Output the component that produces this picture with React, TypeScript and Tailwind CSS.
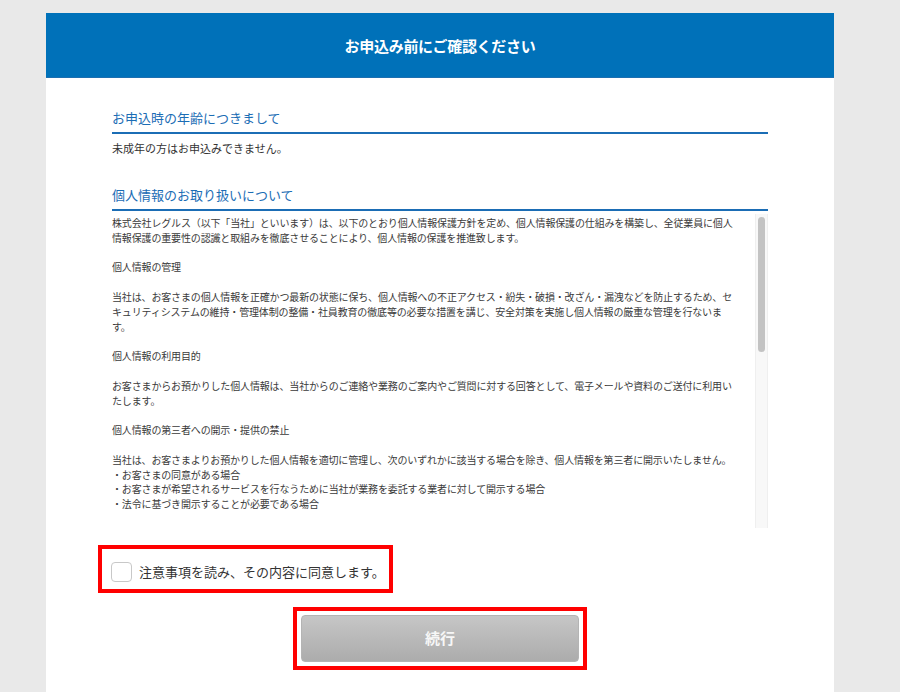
import React from "react";

const jp = { fontFamily: '"Noto Sans CJK JP", "Noto Sans", sans-serif' };

const paragraphs: string[][] = [
  [
    "株式会社レグルス（以下「当社」といいます）は、以下のとおり個人情報保護方針を定め、個人情報保護の仕組みを構築し、全従業員に個人",
    "情報保護の重要性の認識と取組みを徹底させることにより、個人情報の保護を推進致します。",
  ],
  ["個人情報の管理"],
  [
    "当社は、お客さまの個人情報を正確かつ最新の状態に保ち、個人情報への不正アクセス・紛失・破損・改ざん・漏洩などを防止するため、セ",
    "キュリティシステムの維持・管理体制の整備・社員教育の徹底等の必要な措置を講じ、安全対策を実施し個人情報の厳重な管理を行ないま",
    "す。",
  ],
  ["個人情報の利用目的"],
  [
    "お客さまからお預かりした個人情報は、当社からのご連絡や業務のご案内やご質問に対する回答として、電子メールや資料のご送付に利用い",
    "たします。",
  ],
  ["個人情報の第三者への開示・提供の禁止"],
  [
    "当社は、お客さまよりお預かりした個人情報を適切に管理し、次のいずれかに該当する場合を除き、個人情報を第三者に開示いたしません。",
    "・お客さまの同意がある場合",
    "・お客さまが希望されるサービスを行なうために当社が業務を委託する業者に対して開示する場合",
    "・法令に基づき開示することが必要である場合",
  ],
];

function Heading({ children, className }: { children: React.ReactNode; className?: string }) {
  return (
    <div className={className}>
      <div className="text-[13px] leading-[20px] text-[#1b6db5] pb-[4px] border-b-2 border-[#1b6db5]">
        {children}
      </div>
    </div>
  );
}

export default function App() {
  return (
    <div className="min-h-[692px] bg-[#e9e9e9] pt-[13px] overflow-hidden" style={jp}>
      <div className="ml-[46px] w-[788px] min-h-[679px] bg-white">
        <div className="h-[65px] bg-[#0071b9] border-b border-[#1d6fb0] flex items-center justify-center">
          <span className="text-white text-[15px] font-bold tracking-[-0.3px] mt-[2px]">
            お申込み前にご確認ください
          </span>
        </div>

        <div className="px-[66px]">
          <Heading className="mt-[30px]">お申込時の年齢につきまして</Heading>
          <p className="mt-[6px] text-[11px] leading-[16px] text-[#333]">
            未成年の方はお申込みできません。
          </p>

          <Heading className="mt-[29px]">個人情報のお取り扱いについて</Heading>

          <div className="mt-[3px] h-[314px] flex overflow-hidden">
            <div className="flex-1 pt-[2px] text-[10px] leading-[14.8px] tracking-[-0.15px] text-[#3a3a3a] overflow-hidden">
              {paragraphs.map((p, i) => (
                <div key={i} className="mb-[14.8px]">
                  {p.map((line, j) => (
                    <div key={j} className="whitespace-nowrap">
                      {line}
                    </div>
                  ))}
                </div>
              ))}
            </div>
            <div className="w-[13px] h-full bg-[#f8f8f8] border-x border-[#efefef] pt-[3px] flex justify-center">
              <div className="w-[7px] h-[135px] rounded-full bg-[#c3c3c3]" />
            </div>
          </div>

          <div className="mt-[17px] -ml-[14px] w-fit border-4 border-[#ff0000] pl-[9px] pr-[4px] pt-[13px] pb-[7px] flex items-center gap-[7px]">
            <div className="w-[21px] h-[20px] rounded-[4px] border border-[#c8c8c8] bg-white shrink-0" />
            <span className="text-[13px] leading-[20px] text-[#333] whitespace-nowrap">
              注意事項を読み、その内容に同意します。
            </span>
          </div>

          <div className="mt-[14px] mx-auto w-[294px] border-4 border-[#ff0000] p-[4px]">
            <div className="h-[47px] rounded-[4px] bg-gradient-to-b from-[#c6c6c6] to-[#acacac] border border-[#b4b4b4] flex items-center justify-center">
              <span className="text-[#f7f7f7] text-[15px] font-bold">続行</span>
            </div>
          </div>
        </div>
      </div>
    </div>
  );
}
